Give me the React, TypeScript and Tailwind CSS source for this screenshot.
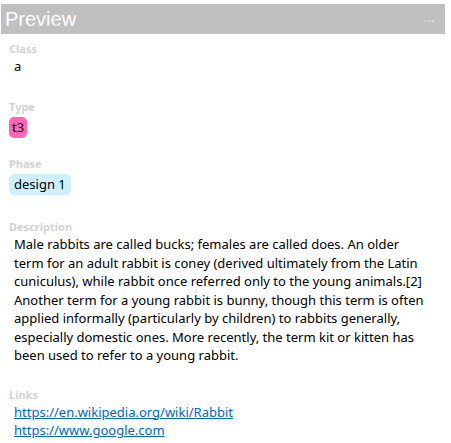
import React from "react";

const font = { fontFamily: '"Noto Sans", "Open Sans", sans-serif' };

function Label({ children }: { children: React.ReactNode }) {
  return (
    <div className="text-[11px] leading-[14px] font-bold text-[#d3d3d3]">{children}</div>
  );
}

export default function App() {
  return (
    <div className="w-[451px] h-[443px] bg-white" style={font}>
      <div className="pt-[4px] pl-[1px]">
        <div className="w-[444px] h-[30px] bg-[#c0c0c0] flex items-center justify-between pl-[4px] pr-[10px]">
          <span
            className="text-white text-[20px] leading-[30px]"
            style={{ fontFamily: '"Liberation Sans", Arial, sans-serif' }}
          >
            Preview
          </span>
          <span className="text-white text-[10px] leading-none tracking-[1px] mt-[-2px]">...</span>
        </div>
      </div>
      <div className="pl-[9px] pr-[23px] pt-[8px]">
        <Label>Class</Label>
        <div className="text-[13px] leading-[21px] pl-[5px] text-black">a</div>

        <div className="mt-[23px]">
          <Label>Type</Label>
          <div className="mt-[0px]">
            <span className="inline-block bg-[#ff66b3] rounded-[5px] px-[3px] text-[13px] leading-[21px] text-black">t3</span>
          </div>
        </div>

        <div className="mt-[19px]">
          <Label>Phase</Label>
          <div className="mt-[0px]">
            <span className="inline-block bg-[#cdefff] rounded-[5px] px-[5px] text-[13px] leading-[21px] text-black">design 1</span>
          </div>
        </div>

        <div className="mt-[25px]">
          <Label>Description</Label>
          <div className="text-[13px] leading-[18.5px] pl-[5px] pt-[1px] text-black">
            Male rabbits are called bucks; females are called does. An older term for an adult rabbit is coney (derived ultimately from the Latin cuniculus), while rabbit once referred only to the young animals.[2] Another term for a young rabbit is bunny, though this term is often applied informally (particularly by children) to rabbits generally, especially domestic ones. More recently, the term kit or kitten has been used to refer to a young rabbit.
          </div>
        </div>

        <div className="mt-[23px]">
          <Label>Links</Label>
          <div className="pl-[5px] text-[13px] leading-[18.5px] pt-[1px]">
            <div>
              <a className="text-[#0066cc] underline" href="#">https://en.wikipedia.org/wiki/Rabbit</a>
            </div>
            <div>
              <a className="text-[#0066cc] underline" href="#">https://www.google.com</a>
            </div>
          </div>
        </div>
      </div>
    </div>
  );
}
